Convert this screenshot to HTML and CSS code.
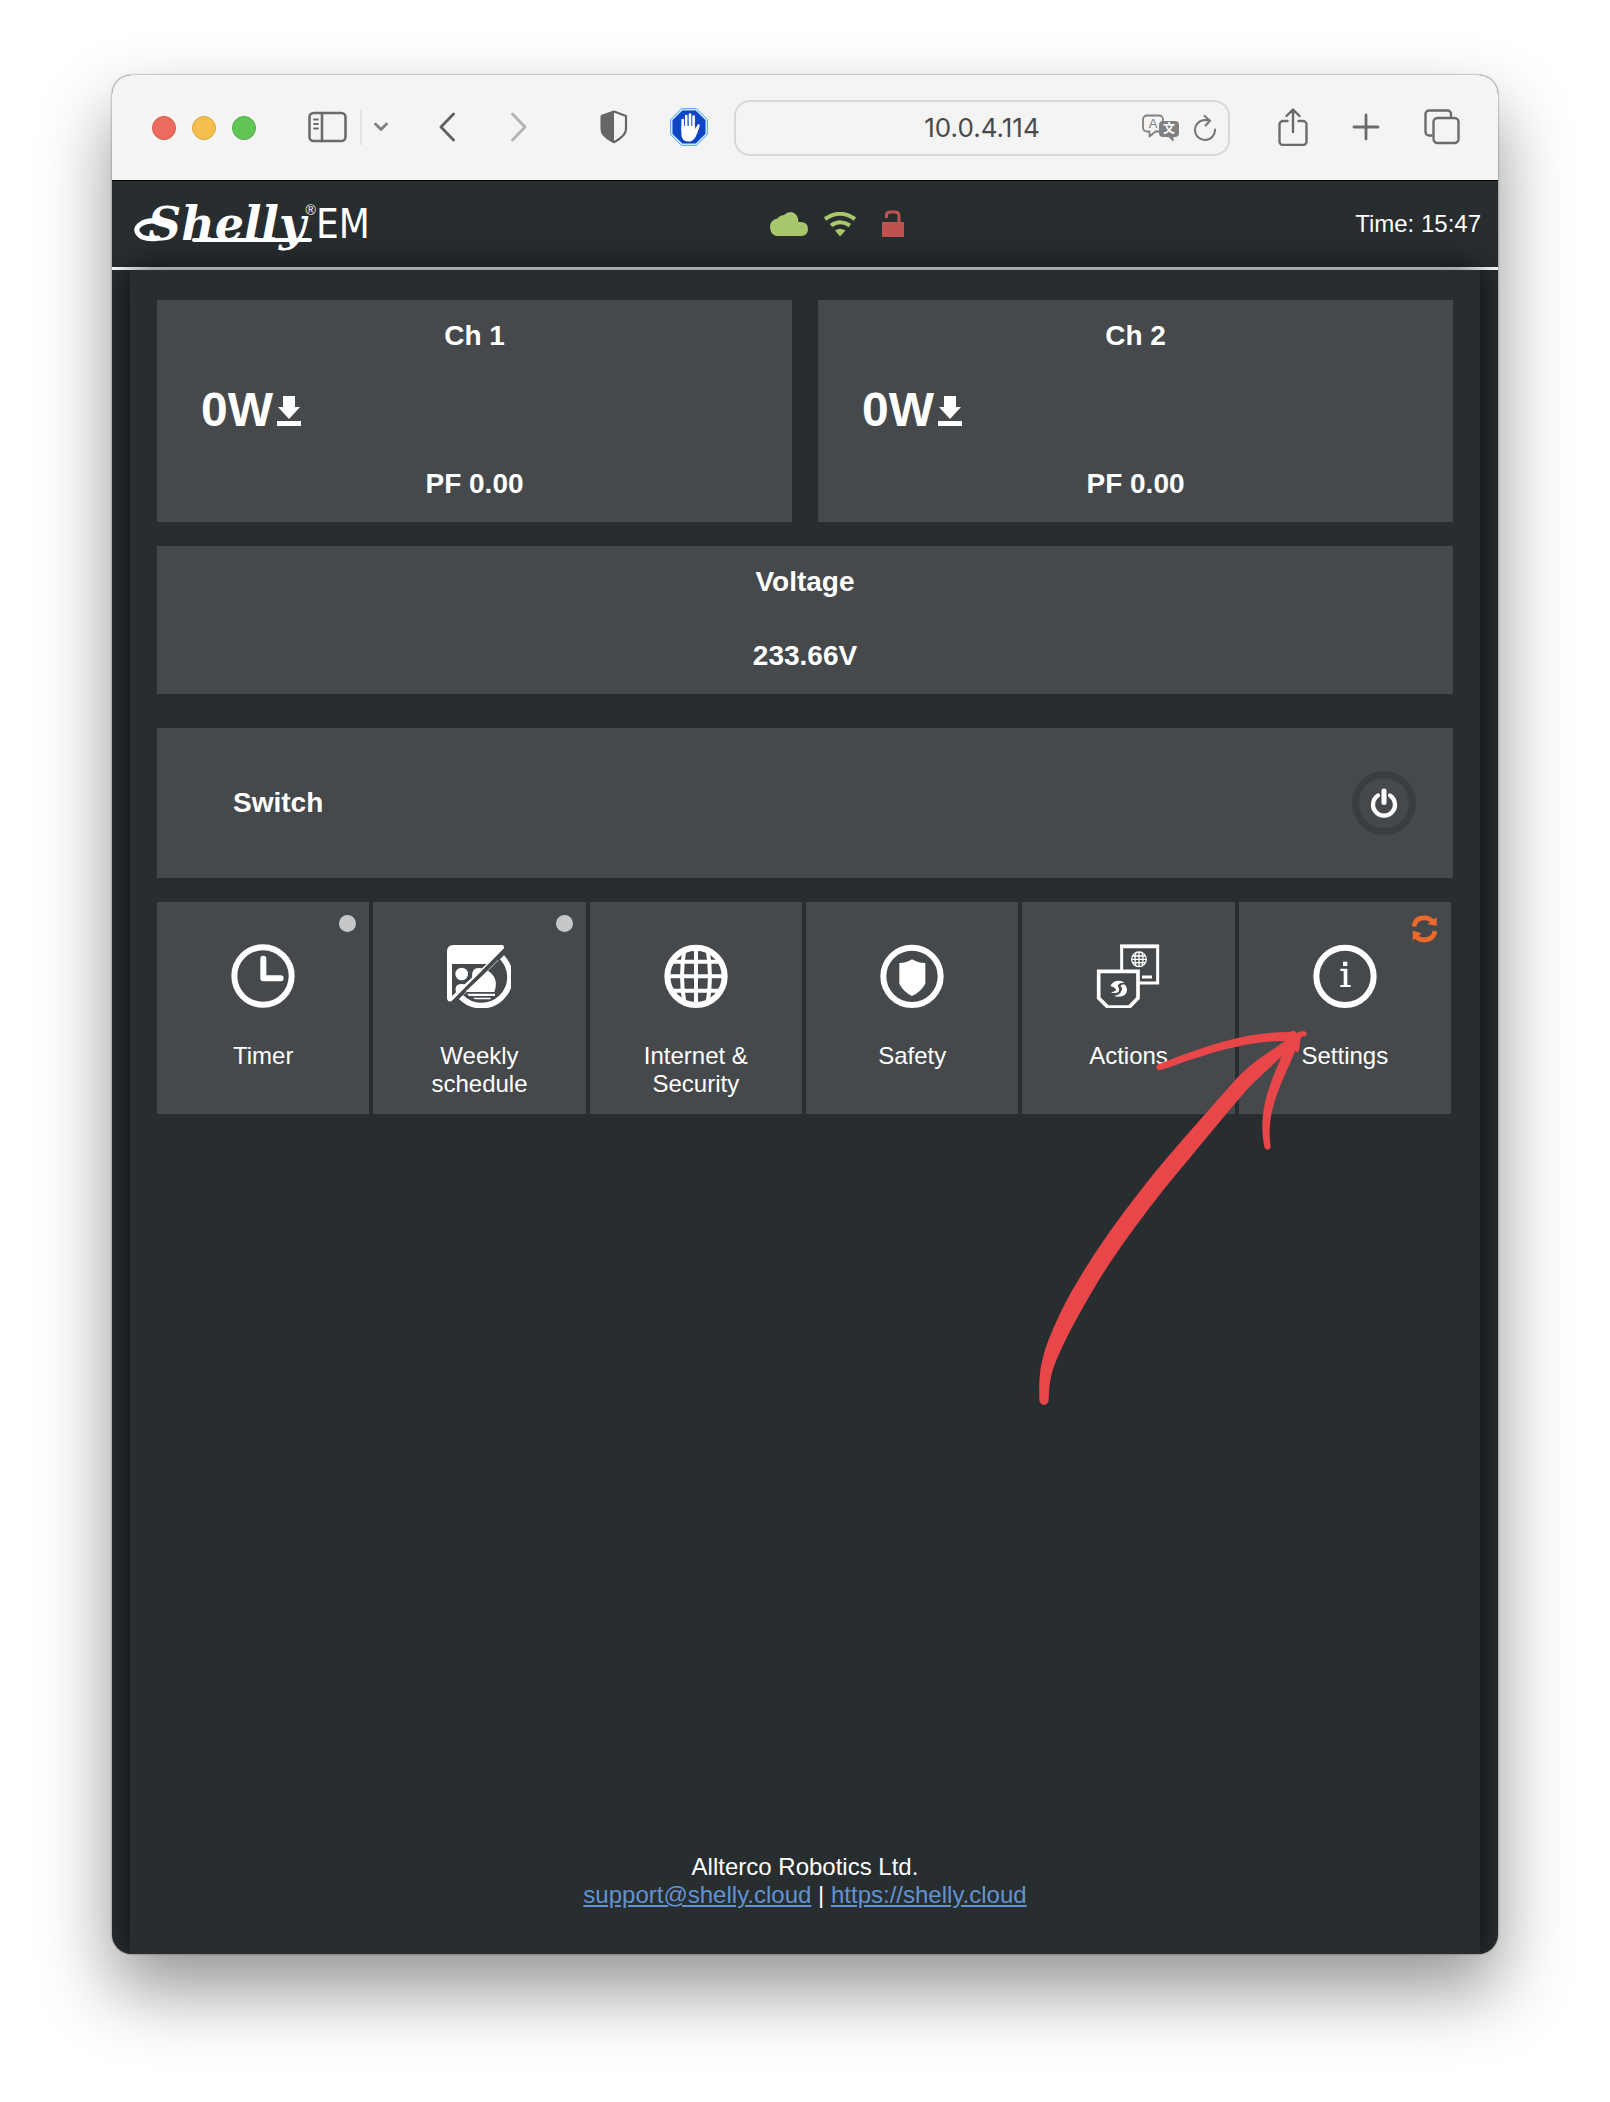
FILE: index.html
```html
<!DOCTYPE html>
<html lang="en">
<head>
<meta charset="utf-8">
<meta name="viewport" content="width=device-width, initial-scale=1">
<title>Shelly EM</title>
<link rel="stylesheet" href="styles.css">
</head>
<body>
<div class="window">
  <div class="toolbar">
    <div class="lights">
      <button class="light light-close" aria-label="Close"></button>
      <button class="light light-min" aria-label="Minimise"></button>
      <button class="light light-max" aria-label="Zoom"></button>
    </div>
    <div class="group sidebar-group">
      <button class="tool" aria-label="Sidebar"><svg width="40" height="32" viewBox="0 0 40 32" fill="none" stroke="#6b6b6b" stroke-width="2.6" stroke-linecap="round"><rect x="1.5" y="2" width="36" height="28" rx="4"/><path d="M14 2v28"/><path d="M6 8.5h4M6 13h4M6 17.500h4" stroke-width="1.800"/></svg></button>
      <span class="divider"></span>
      <button class="tool" aria-label="Sidebar menu"><svg width="14" height="10" viewBox="0 0 14 10" fill="none" stroke="#808084" stroke-width="2.800" stroke-linecap="round" stroke-linejoin="round"><path d="M1.500 2L7 7.500L12.500 2"/></svg></button>
    </div>
    <div class="group nav-group">
      <button class="tool" aria-label="Back"><svg width="16" height="30" viewBox="0 0 16 30" fill="none" stroke="#606060" stroke-width="2.800" stroke-linecap="round" stroke-linejoin="round"><path d="M14.500 2L2 15L14.500 28"/></svg></button>
      <button class="tool" aria-label="Forward"><svg width="16" height="30" viewBox="0 0 16 30" fill="none" stroke="#b3b3b3" stroke-width="2.800" stroke-linecap="round" stroke-linejoin="round"><path d="M1.500 2L14 15L1.500 28"/></svg></button>
    </div>
    <div class="group guard-group">
      <button class="tool" aria-label="Privacy report"><svg width="28" height="34" viewBox="0 0 28 34"><path d="M14 1.500L26 6V19C26 25 20 29 14 32.200C8 29 2 25 2 19V6Z" fill="none" stroke="#666" stroke-width="2.200" stroke-linejoin="round"/><path d="M14 1V33C7 29.500 .5 26 .5 19V7C.5 5.500 1 5 2.500 4.500Z" fill="#666"/></svg></button>
      <button class="tool" aria-label="Content blocker"><svg width="38" height="38" viewBox="0 0 38 38"><path d="M11.500 .5h15l11 11v15l-11 11h-15l-11-11v-15z" fill="#bfe9ff" stroke="#6fa8f8"/><path d="M12.300 2.500h13.400l9.800 9.800v13.400l-9.800 9.800h-13.400l-9.800-9.800v-13.400z" fill="#0f45c4"/><g stroke="#fff" stroke-width="2.600" stroke-linecap="round" fill="none"><path d="M12.700 12v10M16.200 8v14M20 6.500v15M23.600 8.500v14M28.500 17.500l-4 8"/></g><path d="M11.400 18h13.500l1 4.500 2-3.500 1.500 0c-1.500 4-2.500 8-4.500 11-2 3-4.500 3.500-6.500 3.500-5 0-7-3.500-7-8z" fill="#fff"/></svg></button>
    </div>
    <div class="address">
      <input class="address-input" type="text" value="10.0.4.114" aria-label="Address">
      <button class="tool" aria-label="Translate"><svg width="38" height="28" viewBox="0 0 38 28"><path d="M17 17.500h-3.500l-6 5v-5h-2.500a4 4 0 0 1-4-4v-8a4 4 0 0 1 4-4h12a4 4 0 0 1 4 4v2" fill="none" stroke="#808080" stroke-width="1.800" stroke-linejoin="round"/><path d="M21 7h12a4 4 0 0 1 4 4v8a4 4 0 0 1-4 4h-1.500v5l-5-5h-5.500a4 4 0 0 1-4-4v-8a4 4 0 0 1 4-4z" fill="#808080"/><text x="11" y="14" class="glyph-a">A</text><text x="27" y="19" class="glyph-wen">文</text></svg></button>
      <button class="tool reload" aria-label="Reload"><svg width="22" height="26" viewBox="0 0 22 26" fill="none" stroke="#757575" stroke-width="2" stroke-linecap="round" stroke-linejoin="round"><path d="M21 14.500A10 10 0 1 1 11 5L16 5.500M10.500 1L16 5.700L11.500 10.500"/></svg></button>
    </div>
    <div class="group page-group">
      <button class="tool" aria-label="Share"><svg width="30" height="38" viewBox="0 0 30 38" fill="none" stroke="#6b6b6b" stroke-width="2.400" stroke-linecap="round" stroke-linejoin="round"><path d="M9.500 13H5a3.500 3.500 0 0 0-3.500 3.500v17A3.500 3.500 0 0 0 5 37h20a3.500 3.500 0 0 0 3.500-3.500v-17A3.500 3.500 0 0 0 25 13h-4.500M15 24V2M8.500 8L15 1.500L21.500 8"/></svg></button>
      <button class="tool" aria-label="New tab"><svg width="28" height="28" viewBox="0 0 28 28" stroke="#6b6b6b" stroke-width="2.800" stroke-linecap="round"><path d="M14 2v24M2 14h24"/></svg></button>
      <button class="tool" aria-label="Tab overview"><svg width="36" height="36" viewBox="0 0 36 36" fill="none" stroke="#6b6b6b" stroke-width="2.400"><path d="M8.500 26.500H5a3.500 3.500 0 0 1-3.500-3.500V5A3.500 3.500 0 0 1 5 1.500h18.500A3.500 3.500 0 0 1 27 5v3.500"/><rect x="9.500" y="9" width="25" height="25" rx="4"/></svg></button>
    </div>
  </div>

  <header class="header">
    <div class="logo">
      <span class="wordmark">Shelly</span><sup class="registered">®</sup><span class="model">EM</span>
      <svg class="swash" width="180" height="48" viewBox="0 0 180 48" fill="none" stroke="#fff" stroke-linecap="round" aria-hidden="true"><path d="M24 38Q16 40 8 37Q-2 30 7 24Q14 19 26 22" stroke-width="5"/><path d="M60 40H176" stroke-width="4"/></svg>
    </div>
    <div class="status">
      <svg width="38" height="24" viewBox="0 0 38 24" fill="#a9c76b"><path d="M6 24Q0 22 0 15Q0 8 7.500 6.500Q9 3.500 14 3Q17 0 21 0Q28 1 28.500 10Q38 9 38 17Q38 23 32 24Z"/></svg>
      <svg width="32" height="25" viewBox="0 0 32 25"><path d="M1 7Q16-3.500 31 7" fill="none" stroke="#a9c76b" stroke-width="4"/><path d="M7 13.500Q16 7 26 13.500" fill="none" stroke="#a9c76b" stroke-width="4"/><path d="M11 18.500Q16 15 21.500 18.500L16 24.500Z" fill="#a9c76b"/></svg>
      <svg width="22" height="28" viewBox="0 0 22 28"><path d="M4.500 8V5.500Q4.500 2 8 2H13Q17 2 17 6V13" fill="none" stroke="#c0524f" stroke-width="3"/><path d="M0 12h22v15H0z" fill="#c0524f"/></svg>
    </div>
    <div class="time">Time: 15:47</div>
  </header>

  <main class="main">
    <div class="channels">
      <section class="panel">
        <h2 class="reading">Ch 1</h2>
        <p class="power">0W<svg width="24" height="32" viewBox="0 0 24 32" fill="#fff"><path d="M6 2h12v11h5L12 25L1 13h5zM0 27h24v5H0z"/></svg></p>
        <p class="reading">PF 0.00</p>
      </section>
      <section class="panel">
        <h2 class="reading">Ch 2</h2>
        <p class="power">0W<svg width="24" height="32" viewBox="0 0 24 32" fill="#fff"><path d="M6 2h12v11h5L12 25L1 13h5zM0 27h24v5H0z"/></svg></p>
        <p class="reading">PF 0.00</p>
      </section>
    </div>

    <section class="panel voltage">
      <h2 class="reading">Voltage</h2>
      <p class="reading">233.66V</p>
    </section>

    <section class="relay">
      <h2 class="reading">Switch</h2>
      <button class="power-button" aria-label="Toggle switch"><svg width="28" height="30" viewBox="0 0 28 30" fill="none" stroke="#fff" stroke-width="4.200" stroke-linecap="round"><path d="M8 7.500A11 11 0 1 0 20 7.500"/><path d="M14 3v11.500" stroke-width="5"/></svg></button>
    </section>

    <nav class="tiles">
      <button class="tile">
        <span class="dot"></span>
        <svg class="tile-icon" viewBox="275 162 192 192" fill="none" stroke="#fff"><circle cx="371" cy="258" r="86" stroke-width="18"/><path d="M372 206V265H424" stroke-width="18" stroke-linecap="round" stroke-linejoin="round"/></svg>
        <span>Timer</span>
      </button>
      <button class="tile">
        <span class="dot"></span>
        <svg class="tile-icon" viewBox="927 162 192 192" fill="#fff"><path fill-rule="evenodd" d="M945 165H1092Q1099 166 1098 175L942 332Q930 340 927 325V183Q928 167 945 165ZM942 222V318L1046 222Z"/><circle cx="971" cy="252" r="19"/><path d="M1002 262Q1000 234 1022 234Q1032 234 1035 238L1010 263ZM954 306Q948 282 970 282Q980 282 986 286L961 309Z"/><path d="M985 302L1050 242Q1084 264 1069 306H985Z"/><path d="M987 311H1071V318H993ZM1004 323H1058V328H1012Z"/><path d="M1092 202A82 82 0 0 1 969 321" fill="none" stroke="#fff" stroke-width="17"/><path d="M978 313L1081 210" stroke="#fff" stroke-width="2"/></svg>
        <span>Weekly schedule</span>
      </button>
      <button class="tile">
        <svg class="tile-icon" viewBox="254 160 192 192" fill="none" stroke="#fff" stroke-width="12"><circle cx="350" cy="257" r="86" stroke-width="18"/><path d="M350 165V348M260 257H440M280 213H420M280 300H420M316 172Q300 257 316 342M384 172Q400 257 384 342"/></svg>
        <span>Internet &amp; Security</span>
      </button>
      <button class="tile">
        <svg class="tile-icon" viewBox="902 160 192 192"><circle cx="998" cy="257" r="86" fill="none" stroke="#fff" stroke-width="18"/><path d="M998 206Q1015 217 1038 217V279Q1025 303 998 316Q972 303 960 279V217Q982 217 998 206Z" fill="#fff"/></svg>
        <span>Safety</span>
      </button>
      <button class="tile">
        <svg class="tile-icon" viewBox="261 160 192 192" fill="none" stroke="#fff" stroke-width="9"><path d="M338 240V167H446V277H392"/><path d="M399 259H429"/><path d="M333 167H450" stroke-width="11"/><path d="M269 242H387V322L361 349H296L269 322Z" stroke-width="11"/><g stroke-width="4"><circle cx="390" cy="206" r="22"/><path d="M390 184V228M368 206H412M371 196H409M371 216H409M381 186Q375 206 381 226M399 186Q405 206 399 226"/></g><path d="M304 286Q312 270 330 270Q340 270 346 276Q328 276 326 286Q334 296 328 304Q324 308 306 306L320 300Q324 292 304 286Z" fill="#fff" stroke="none"/><path d="M334 286Q344 276 351 286Q358 302 348 312Q336 322 314 316Q336 312 336 302Q344 294 334 286Z" fill="#fff" stroke="none"/></svg>
        <span>Actions</span>
      </button>
      <button class="tile">
        <svg class="update" width="25" height="28" viewBox="1206 74 75 83" fill="none" stroke="#ee6a2b" stroke-width="14"><path d="M1212 108Q1215 82 1242 82Q1258 81 1270 95M1275 122Q1270 148 1242 148Q1225 148 1217 136"/><path d="M1280 80V106L1252 101ZM1208 121L1235 128L1208 150Z" fill="#ee6a2b" stroke="none"/></svg>
        <svg class="tile-icon" viewBox="908 160 192 192"><circle cx="1004" cy="257" r="86" fill="none" stroke="#fff" stroke-width="18"/><path d="M998 213h13v13h-13zM990 234h21v49h10v6h-31v-6h10v-42h-10z" fill="#fff"/></svg>
        <span>Settings</span>
      </button>
      <svg class="arrow" viewBox="90 75 870 1155" fill="#e9464a" aria-hidden="true"><path d="M118 1200C116 1110 124 1070 160 985C190 915 222 860 250 815C335 680 420 570 500 475C570 393 640 315 705 241C750 192 800 160 850 127C880 102 890 96 912 93Q924 98 918 108C900 110 895 116 870 145C830 186 782 224 740 270C680 340 620 412 560 485C505 550 455 612 410 675C355 750 325 795 295 843C255 910 215 980 185 1045C152 1115 149 1140 146 1200Q144 1214 132 1215Q120 1214 118 1200Z"/><path d="M472 194C620 135 740 95 870 96Q885 88 888 98L900 105L892 124C750 116 640 155 480 211Q463 209 472 194Z"/><path d="M794 445C772 340 804 260 856 145L875 105L903 108L897 150Q893 162 886 152C850 240 795 330 812 442Q806 455 794 445Z"/></svg>
    </nav>

    <footer class="footer">
      <div>Allterco Robotics Ltd.</div>
      <div><a href="mailto:support@shelly.cloud">support@shelly.cloud</a> | <a href="https://shelly.cloud">https://shelly.cloud</a></div>
    </footer>
  </main>
</div>
</body>
</html>
```
FILE: styles.css
```css
* { box-sizing: border-box; }

body {
  margin: 0;
  min-height: 100vh;
  padding: 75px 112px 148px;
  display: flex;
  flex-direction: column;
  background: #fff;
  color: #fff;
  font: 24px/28px "Liberation Sans", Arial, sans-serif;
}

button {
  border: 0;
  padding: 0;
  background: none;
  color: inherit;
  font: inherit;
}

svg { display: block; flex: none; }
h2, p { margin: 0; }

.window {
  flex: 1;
  display: flex;
  flex-direction: column;
  border-radius: 20px;
  overflow: hidden;
  background: #282d30;
  box-shadow: 0 0 2px rgba(0, 0, 0, .6), 0 36px 72px rgba(0, 0, 0, .42);
}

/* Browser toolbar */
.toolbar {
  display: flex;
  align-items: center;
  height: 106px;
  padding: 0 38px 0 40px;
  background: #f4f4f4;
  border-bottom: 1px solid #000;
}

.group, .lights { display: flex; align-items: center; }
.group { padding-bottom: 2px; }
.lights { gap: 16px; }
.light { width: 24px; height: 24px; border-radius: 50%; }
.light-close { background: #ec6a5e; border: 1px solid #d8564b; }
.light-min { background: #f4bf4f; border: 1px solid #dba53a; }
.light-max { background: #61c554; border: 1px solid #4fac42; }

.sidebar-group { gap: 12px; margin-left: 52px; }
.divider { width: 2px; height: 36px; background: #e3e3e3; }
.nav-group { gap: 56px; margin-left: 51px; }
.guard-group { gap: 42px; margin-left: 73px; }
.page-group { gap: 44px; margin-left: 48px; }

.address {
  flex: 1;
  display: flex;
  align-items: center;
  min-width: 0;
  height: 56px;
  margin-left: 26px;
  padding-right: 12px;
  border: 2px solid #d8d8d8;
  border-radius: 16px;
}

.address-input {
  flex: 1;
  min-width: 0;
  padding: 0 0 0 86px;
  border: 0;
  background: none;
  color: #4a4a4a;
  text-align: center;
  font: 26px/32px Inter, sans-serif;
}

.reload { margin-left: 14px; }

.glyph-a {
  fill: #808080;
  font: 13px "Liberation Sans", sans-serif;
  text-anchor: middle;
}

.glyph-wen {
  fill: #fff;
  font: 700 12px "Noto Sans CJK SC", sans-serif;
  text-anchor: middle;
}

/* Device header */
.header {
  display: grid;
  grid-template-columns: 1fr auto 1fr;
  align-items: center;
  height: 89px;
  padding: 0 17px 0 22px;
  border-bottom: 3px solid #fff;
}

.logo {
  position: relative;
  display: flex;
  align-items: center;
  height: 48px;
  padding-left: 14px;
}

.wordmark { font: italic 700 46px/48px "DejaVu Serif", serif; }
.registered { align-self: flex-start; font-size: 14px; line-height: 20px; }
.model { font: 40px/48px "DejaVu Sans Condensed", "Liberation Sans", sans-serif; }
.swash { position: absolute; top: 0; left: 0; }
.status { display: flex; align-items: center; gap: 16px; padding-left: 58px; }
.status svg:last-child { margin-left: 10px; }
.time { text-align: right; }

/* Page body */
.main {
  flex: 1;
  display: flex;
  flex-direction: column;
  gap: 24px;
  margin: 0 18px;
  padding: 30px 27px 45px;
  background: #282d30;
  box-shadow: 0 0 30px rgba(0, 0, 0, .75);
}

.channels { display: grid; grid-template-columns: 1fr 1fr; gap: 26px; }

.panel {
  display: flex;
  flex-direction: column;
  gap: 30px;
  padding: 20px 0 22px;
  background: #45494b;
  text-align: center;
}

.reading { font-weight: 700; font-size: 28px; line-height: 32px; }

.power {
  display: flex;
  align-items: center;
  gap: 4px;
  padding-left: 44px;
  font-weight: 700;
  font-size: 48px;
  line-height: 56px;
}

.voltage { gap: 42px; }

.relay {
  display: flex;
  align-items: center;
  justify-content: space-between;
  height: 150px;
  margin-top: 10px;
  padding: 0 37px 0 76px;
  background: #45494b;
}

.power-button {
  display: flex;
  align-items: center;
  justify-content: center;
  width: 64px;
  height: 64px;
  border: 7px solid #3a3e40;
  border-radius: 50%;
}

.tiles {
  position: relative;
  display: grid;
  grid-template-columns: repeat(6, 1fr);
  gap: 4px;
  margin-right: 2px;
}

.tile {
  position: relative;
  display: flex;
  flex-direction: column;
  align-items: center;
  gap: 34px;
  min-height: 212px;
  padding: 42px 30px 16px;
  background: #45494b;
}

.tile-icon { width: 64px; height: 64px; }

.dot {
  position: absolute;
  top: 13px;
  right: 13px;
  width: 17px;
  height: 17px;
  border-radius: 50%;
  background: #c6c7c9;
}

.update { position: absolute; top: 13px; right: 14px; }

.arrow {
  position: absolute;
  top: 123px;
  right: 131px;
  width: 290px;
  height: 385px;
  pointer-events: none;
}

.footer { margin-top: auto; text-align: center; }
.footer a { color: #6293cf; }
```
